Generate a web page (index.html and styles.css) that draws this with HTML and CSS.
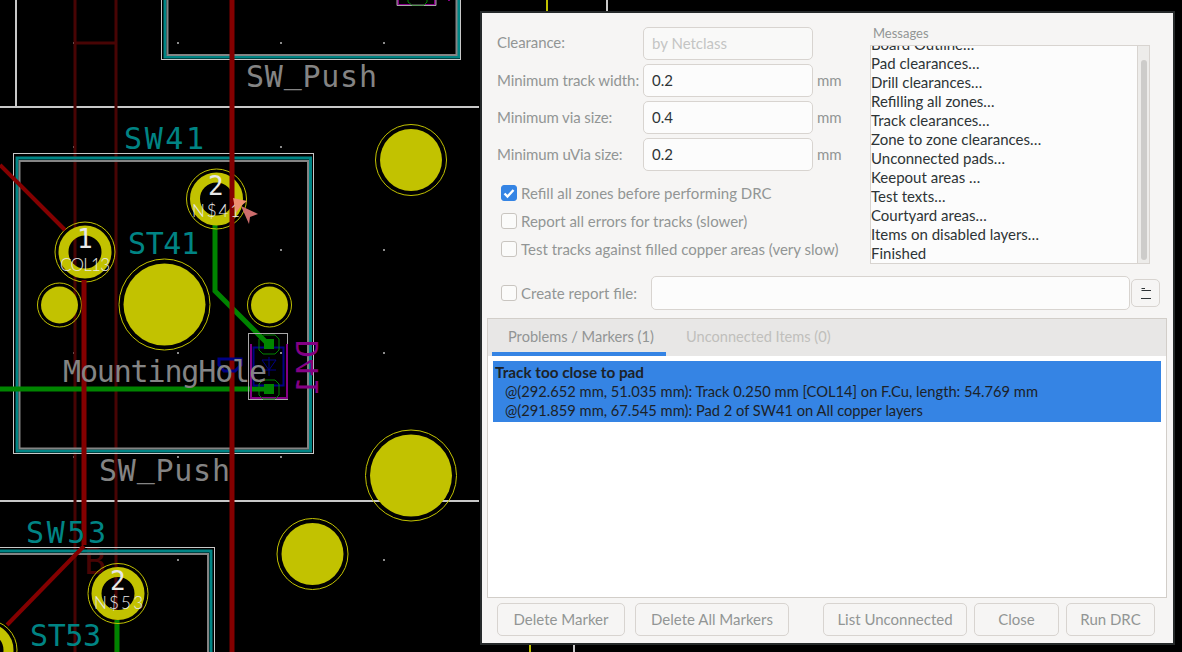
FILE: index.html
```html
<!DOCTYPE html>
<html lang="en">
<head>
  <meta charset="UTF-8">
  <title>DRC Control</title>
  <link rel="stylesheet" href="styles.css">
</head>

<body>
  <!-- === BOARD CANVAS === -->
  <svg class="board" width="1182" height="652" viewBox="0 0 1182 652">
    <!-- grid dots -->
    <g class="dots">
      <rect x="73" y="42" width="2" height="2"/><rect x="177" y="42" width="2" height="2"/><rect x="280" y="42" width="2" height="2"/><rect x="383" y="42" width="2" height="2"/>
      <rect x="73" y="146" width="2" height="2"/><rect x="280" y="146" width="2" height="2"/>
      <rect x="280" y="249" width="2" height="2"/><rect x="383" y="249" width="2" height="2"/>
      <rect x="73" y="352" width="2" height="2"/><rect x="177" y="352" width="2" height="2"/><rect x="280" y="352" width="2" height="2"/><rect x="383" y="352" width="2" height="2"/>
      <rect x="73" y="456" width="2" height="2"/><rect x="177" y="456" width="2" height="2"/><rect x="280" y="456" width="2" height="2"/>
      <rect x="177" y="559" width="2" height="2"/><rect x="383" y="559" width="2" height="2"/>
    </g>

    <!-- board edges -->
    <g class="edge">
      <path d="M0 107H479M16 0V107M0 501H479M607 0V12M574 644V652"/>
    </g>
    <path class="npth-line" d="M547 0V12M530 644V652"/>

    <!-- inner copper -->
    <g class="copper-dim">
      <path d="M75 0V652M116 0V652M75 43H116"/>
      <text class="ref-b" x="84" y="574">B</text>
    </g>

    <!-- footprint frames -->
    <g class="frame">
      <rect class="frame-white" x="161.5" y="-240.5" width="299" height="300"/>
      <rect class="frame-teal" x="165" y="-238" width="293.500" height="295"/>
      <rect class="frame-grey" x="167.500" y="-235" width="289" height="290"/>
      <rect class="frame-white" x="13.500" y="153.500" width="300" height="300"/>
      <rect class="frame-teal" x="17" y="158" width="293.500" height="293"/>
      <rect class="frame-grey" x="19.500" y="161" width="288.500" height="287.500"/>
      <rect class="frame-white" x="-85.500" y="547.500" width="300" height="300"/>
      <rect class="frame-teal" x="-82" y="551" width="293" height="300"/>
      <rect class="frame-grey" x="-80" y="554" width="288" height="300"/>
    </g>

    <!-- front copper tracks -->
    <g class="track-green">
      <path d="M215 225V291L268 344M0 389H269"/>
      <path d="M117 620V652"/>
    </g>

    <!-- pads and holes -->
    <g class="hole">
      <circle cx="411" cy="160" r="31"/><circle class="ring" cx="411" cy="160" r="35.500"/>
      <circle cx="164.500" cy="304.500" r="41"/><circle class="ring" cx="164.500" cy="304.500" r="45.500"/>
      <circle cx="59.500" cy="305" r="18.500"/><circle class="ring" cx="59.500" cy="305" r="22"/>
      <circle cx="269.500" cy="305" r="18.500"/><circle class="ring" cx="269.500" cy="305" r="22"/>
      <circle cx="411" cy="475.500" r="41"/><circle class="ring" cx="411" cy="475.500" r="45.500"/>
      <circle cx="312.500" cy="554" r="31"/><circle class="ring" cx="312.500" cy="554" r="35.500"/>
    </g>
    <g class="pad">
      <circle cx="85" cy="252" r="21.500"/><circle class="ring" cx="85" cy="252" r="30"/>
      <circle cx="216.500" cy="199" r="21.500"/><circle class="ring" cx="216.500" cy="199" r="30"/>
      <circle cx="118" cy="593.500" r="21.500"/><circle class="ring" cx="118" cy="593.500" r="30"/>
      <circle cx="-13" cy="650" r="21.500"/><circle class="ring" cx="-13" cy="650" r="30"/>
    </g>

    <!-- back/top copper tracks -->
    <g class="track-red">
      <path class="thin" d="M0 165L65 230"/>
      <path d="M84 280V545"/>
      <path class="thin" d="M84 546L7 625"/>
      <path d="M232 0V652"/>
    </g>

    <!-- diode D41 -->
    <g class="diode">
      <rect class="d-white" x="248.500" y="333.500" width="39" height="66"/>
      <path class="d-purple" d="M251 344V398H287V344"/>
      <rect class="d-blue" x="253.500" y="347.500" width="30" height="38"/>
      <path class="d-blue-thin" d="M269 357V376M262 360H276L269 370ZM262 370H276"/>
      <path class="d-blue-cup" d="M219 359H241V365L235 371H224L219 365Z"/>
      <path class="d-pad" d="M264 339H274V349H264ZM264 384H274V394H264Z"/>
      <path class="d-pad-line" d="M263 335H275L279 339V350L275 354H263L259 350V339ZM263 380H275L279 384V395L275 399H263L259 395V384Z"/>
      <path class="d-purple" d="M398 0V5H435V0"/>
      <path class="d-white-top" d="M397 0V5.500H436V0"/>
      <path class="d-pad-line" d="M408 0V2L412 5H424L427 2V0"/>
      <path class="d-purple" d="M448 0H450"/>
    </g>

    <!-- silk and fab texts -->
    <g class="labels">
      <text class="t-grey" x="246" y="87" textLength="131">SW<tspan dy="-4">_</tspan><tspan dy="4">Push</tspan></text>
      <text class="t-teal" x="124" y="149" textLength="80">SW41</text>
      <text class="t-teal" x="128" y="254" textLength="71">ST41</text>
      <text class="t-grey" x="63" y="382" textLength="204">MountingHole</text>
      <text class="t-grey" x="99" y="481" textLength="131">SW<tspan dy="-4">_</tspan><tspan dy="4">Push</tspan></text>
      <text class="t-teal" x="26" y="543" textLength="80">SW53</text>
      <text class="t-teal" x="30" y="646" textLength="71">ST53</text>
      <text class="t-num" x="77" y="248">1</text>
      <text class="t-num" x="208" y="195">2</text>
      <text class="t-num" x="110" y="590">2</text>
      <text class="t-net" x="60" y="271" textLength="50">COL13</text>
      <text class="t-net" x="192" y="217" textLength="48">N$41</text>
      <text class="t-net" x="94" y="609" textLength="49">N$53</text>
      <!-- back side text, so it reads mirrored -->
      <text class="t-ref" transform="translate(318 340) rotate(90) scale(1 -1)" textLength="55">D41</text>
    </g>

    <!-- DRC marker -->
    <polygon class="marker-a" points="233,198 247,201 241,206 236,213"/>
    <polygon class="marker-b" points="241,206 258,214 250,217 249,224"/>
  </svg>

  <!-- === DRC DIALOG === -->
  <div class="dialog">
    <div class="top">
      <div class="options">
        <div class="form">
          <label class="lbl first">Clearance:</label>
          <input class="field" value="by Netclass" disabled>
          <span></span>
          <label class="lbl">Minimum track width:</label>
          <input class="field" value="0.2">
          <span class="lbl">mm</span>
          <label class="lbl">Minimum via size:</label>
          <input class="field" value="0.4">
          <span class="lbl">mm</span>
          <label class="lbl">Minimum uVia size:</label>
          <input class="field" value="0.2">
          <span class="lbl">mm</span>
        </div>
        <div class="checks">
          <div class="check-row">
            <span class="box on"><svg width="16" height="16" viewBox="0 0 16 16"><path d="M3.500 8.500L6.500 11.500L12.500 5" fill="none" stroke="#fff" stroke-width="2.400"/></svg></span>
            <span class="lbl">Refill all zones before performing DRC</span>
          </div>
          <div class="check-row">
            <span class="box"></span>
            <span class="lbl">Report all errors for tracks (slower)</span>
          </div>
          <div class="check-row">
            <span class="box"></span>
            <span class="lbl">Test tracks against filled copper areas (very slow)</span>
          </div>
        </div>
      </div>
      <div class="messages">
        <div class="messages-title">Messages</div>
        <div class="messages-box">
          <div class="messages-list">
            <div>Board Outline…</div>
            <div>Pad clearances…</div>
            <div>Drill clearances…</div>
            <div>Refilling all zones…</div>
            <div>Track clearances…</div>
            <div>Zone to zone clearances…</div>
            <div>Unconnected pads…</div>
            <div>Keepout areas …</div>
            <div>Test texts…</div>
            <div>Courtyard areas…</div>
            <div>Items on disabled layers…</div>
            <div>Finished</div>
          </div>
          <div class="scrollbar"><div class="thumb"></div></div>
        </div>
      </div>
    </div>

    <div class="report">
      <span class="box"></span>
      <span class="lbl report-label">Create report file:</span>
      <input class="field report-field">
      <button class="pick">
        <svg width="12" height="14" viewBox="0 0 12 14"><path d="M1.500 2.500H5M1.500 4.500H11M1 12.500H11" stroke="#2e3436" fill="none"/></svg>
      </button>
    </div>

    <div class="tabs">
      <div class="tab-bar">
        <div class="tab active">Problems / Markers (1)</div>
        <div class="tab">Unconnected Items (0)</div>
      </div>
      <div class="tab-body">
        <div class="marker-row">
          <div class="marker-title">Track too close to pad</div>
          <div class="marker-line">@(292.652 mm, 51.035 mm): Track 0.250 mm [COL14] on F.Cu, length: 54.769 mm</div>
          <div class="marker-line">@(291.859 mm, 67.545 mm): Pad 2 of SW41 on All copper layers</div>
        </div>
      </div>
    </div>

    <div class="actions">
      <button class="btn w-marker">Delete Marker</button>
      <button class="btn w-all">Delete All Markers</button>
      <button class="btn w-list">List Unconnected</button>
      <button class="btn w-close">Close</button>
      <button class="btn w-run">Run DRC</button>
    </div>
  </div>
</body>
</html>
```

FILE: styles.css
```css
:root {
  --panel: #f6f5f4;
  --line: #d8d4d0;
  --muted: #929595;
  --ink: #2e3436;
  --blue: #3584e4;
  --font: "Lato", "Noto Sans", sans-serif;
}

html, body {
  margin: 0;
  height: 100%;
  background: #000;
  overflow: hidden;
}

body {
  position: relative;
  font-family: var(--font);
  font-size: 15px;
}

/* === BOARD === */
.board {
  display: block;
}

.dots rect { fill: #8a8a8a; }

.edge path {
  fill: none;
  stroke: #c8c8c8;
  stroke-width: 2;
}

.npth-line {
  fill: none;
  stroke: #c2c200;
  stroke-width: 2;
}

.copper-dim path {
  fill: none;
  stroke: #480404;
  stroke-width: 3;
}

.ref-b {
  font: 36px "DejaVu Sans Mono", monospace;
  fill: #480404;
}

.frame rect { fill: none; }
.frame-white { stroke: #c8c8c8; stroke-width: 1; }
.frame-teal { stroke: #008484; stroke-width: 3; }
.frame-grey { stroke: #848484; stroke-width: 2; }

.track-green path {
  fill: none;
  stroke: #008400;
  stroke-width: 5;
}

.hole circle { fill: #c2c200; }
.pad circle {
  fill: none;
  stroke: #c2c200;
  stroke-width: 10;
}

.hole .ring,
.pad .ring {
  fill: none;
  stroke: #c2c200;
  stroke-width: 1;
}

.track-red path {
  fill: none;
  stroke: #840000;
  stroke-width: 5;
}

.track-red .thin { stroke-width: 4; }

.diode path, .diode rect { fill: none; }
.d-white { stroke: #a8a8a8; stroke-width: 1; }
.d-white-top { stroke: #a8a8a8; stroke-width: 1; }
.diode .d-purple { stroke: #840084; stroke-width: 2; }
.d-blue { stroke: #000084; stroke-width: 2; }
.d-blue-thin { stroke: #000084; stroke-width: 1; }
.d-blue-cup { stroke: #000084; stroke-width: 3; }
.diode .d-pad { fill: #008400; }
.d-pad-line { stroke: #008400; stroke-width: 1; }

.labels text {
  font-family: "DejaVu Sans Mono", monospace;
}

.t-grey { font-size: 30px; fill: #848484; }
.t-teal { font-size: 30px; fill: #008484; }
.t-num { font-size: 26px; fill: #e8e8e8; }
.labels .t-net { font-family: "Lato", sans-serif; font-weight: 300; font-size: 17px; fill: #e8e8e8; }
.t-ref { font-size: 30px; fill: #840084; }

.marker-a { fill: #ef8f70; }
.marker-b { fill: #cc6c6c; }

/* === DIALOG === */
.dialog {
  position: absolute;
  left: 480px;
  top: 11px;
  width: 695px;
  height: 634px;
  box-sizing: border-box;
  border: 2px solid #262a2b;
  background: var(--panel);
  display: flex;
  flex-direction: column;
}

.lbl { color: var(--muted); white-space: nowrap; }

.top {
  display: flex;
  padding: 14px 0 0 15px;
  height: 251px;
  box-sizing: border-box;
}

.options { width: 373px; }

.form {
  display: grid;
  grid-template-columns: 146px 170px auto;
  row-gap: 4px;
  grid-auto-rows: 33px;
  align-items: center;
  justify-items: start;
}

.form .lbl { padding-bottom: 2px; letter-spacing: -0.1px; }
.form .first { padding-bottom: 4px; }
.form .lbl:nth-child(3n) { margin-left: 4px; }

.field {
  width: 100%;
  height: 33px;
  box-sizing: border-box;
  border: 1px solid var(--line);
  border-radius: 5px;
  background: #fcfcfc;
  padding: 0 8px 1px;
  font: inherit;
  color: var(--ink);
  outline: none;
}

.field:disabled {
  background: #f9f9f8;
  color: #c4c5c4;
}

.checks {
  margin-top: 8px;
  padding-left: 4px;
}

.check-row {
  display: flex;
  align-items: center;
  gap: 4px;
  height: 28px;
}

.box {
  width: 16px;
  height: 16px;
  box-sizing: border-box;
  border: 1px solid #c9c5c0;
  border-radius: 3px;
  background: #fbfbfa;
  flex: none;
}

.box.on {
  background: var(--blue);
  border-color: var(--blue);
}

.box.on svg {
  display: block;
  margin: -1px;
}

.messages { width: 280px; }

.messages-title {
  height: 18px;
  padding-left: 3px;
  font-size: 13px;
  line-height: 12px;
  color: var(--muted);
}

.messages-box {
  display: flex;
  height: 219px;
  box-sizing: border-box;
  border: 1px solid var(--line);
  background: #fcfcfc;
  overflow: hidden;
}

.messages-list {
  flex: 1;
  margin-top: -11px;
  color: var(--ink);
  line-height: 19px;
}

.scrollbar {
  width: 12px;
  background: #edecea;
  border-left: 1px solid var(--line);
  padding: 14px 3px 0;
  box-sizing: border-box;
}

.thumb {
  width: 6px;
  height: 200px;
  border-radius: 3px;
  background: #cdccca;
}

.report {
  display: flex;
  align-items: center;
  height: 34px;
  margin-top: 12px;
  padding-left: 19px;
}

.report-label {
  margin-left: 4px;
  width: 130px;
}

.report-field {
  width: 479px;
  height: 34px;
  flex: none;
}

.pick {
  width: 29px;
  height: 28px;
  margin-left: 1px;
  padding: 0;
  border: 1px solid var(--line);
  border-radius: 5px;
  background: var(--panel);
  display: flex;
  align-items: center;
  justify-content: center;
}

.tabs {
  width: 680px;
  height: 280px;
  margin: 8px 0 0 5px;
  box-sizing: border-box;
  border: 1px solid #d2cec9;
  background: #fff;
  display: flex;
  flex-direction: column;
}

.tab-bar {
  display: flex;
  height: 37px;
  flex: none;
  gap: 4px;
  padding-left: 4px;
  background: #e8e7e6;
}

.tab {
  padding: 0 16px;
  line-height: 36px;
  font-size: 14.6px;
  color: #c0bfbc;
  white-space: nowrap;
}

.tab.active {
  width: 174px;
  box-sizing: border-box;
  color: var(--muted);
  border-bottom: 4px solid var(--blue);
}

.tab-body {
  padding: 5px;
}

.marker-row {
  height: 61px;
  box-sizing: border-box;
  padding: 2px 2px 0;
  background: var(--blue);
  color: #1c2228;
  line-height: 19px;
  font-size: 14.7px;
}

.marker-title { font-weight: 700; font-size: 15.3px; }
.marker-line { padding-left: 10px; }

.actions {
  display: flex;
  gap: 7px;
  margin-top: 5px;
  padding-left: 15px;
}

.btn {
  height: 33px;
  padding: 0 0 1px;
  border: 1px solid var(--line);
  border-radius: 5px;
  background: var(--panel);
  color: var(--muted);
  font: inherit;
}

.w-marker { width: 128px; margin-right: 3px; }
.w-all { width: 154px; margin-right: 27px; }
.w-list { width: 144px; }
.w-close { width: 85px; }
.w-run { width: 89px; }
```
